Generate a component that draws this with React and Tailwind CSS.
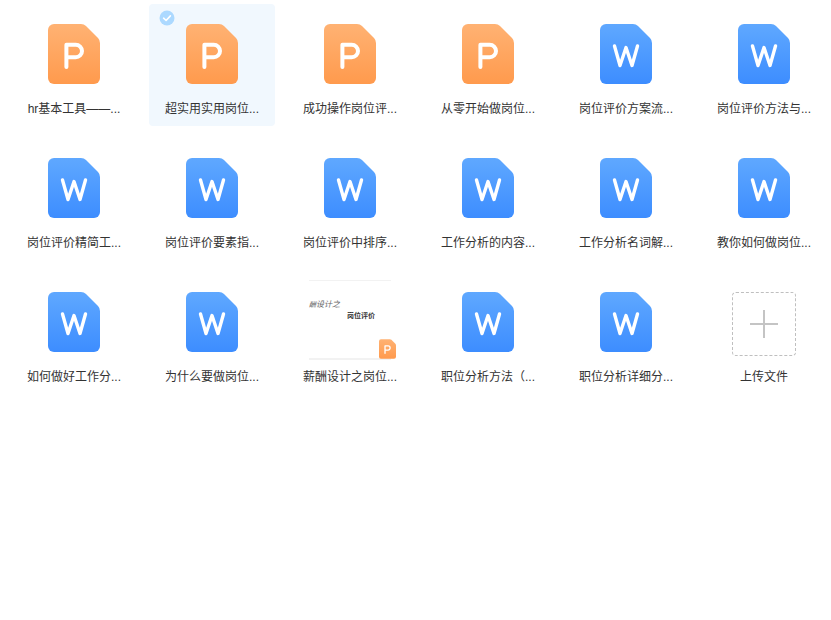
const files = [
  ["p", "hr基本工具——..."],
  ["p", "超实用实用岗位...", true],
  ["p", "成功操作岗位评..."],
  ["p", "从零开始做岗位..."],
  ["w", "岗位评价方案流..."],
  ["w", "岗位评价方法与..."],
  ["w", "岗位评价精简工..."],
  ["w", "岗位评价要素指..."],
  ["w", "岗位评价中排序..."],
  ["w", "工作分析的内容..."],
  ["w", "工作分析名词解..."],
  ["w", "教你如何做岗位..."],
  ["w", "如何做好工作分..."],
  ["w", "为什么要做岗位..."],
  ["t", "薪酬设计之岗位..."],
  ["w", "职位分析方法（..."],
  ["w", "职位分析详细分..."],
];

function FileIcon({ kind, small }) {
  const id = `grad-${kind}`;
  const top = kind === "p" ? "#FFB273" : "#5FA8FF";
  const bottom = kind === "p" ? "#FF9A4D" : "#3D8DFF";
  return (
    <svg viewBox="0 0 52 60" className={small ? "w-[17px] h-[20px]" : "w-[52px] h-[60px]"}>
      <defs>
        <linearGradient id={id} x1="0" y1="0" x2="0" y2="1">
          <stop offset="0" stopColor={top} />
          <stop offset="1" stopColor={bottom} />
        </linearGradient>
      </defs>
      <path d="M6 0H33Q36 0 38 2L50 14Q52 16 52 19V54a6 6 0 0 1-6 6H6a6 6 0 0 1-6-6V6a6 6 0 0 1 6-6Z" fill={`url(#${id})`} />
      {kind === "p" ? (
        <path d="M18.4 43V20.7H27.7a6.3 6.3 0 0 1 0 12.6H18.4" fill="none" stroke="#fff" strokeWidth="4" strokeLinecap="round" strokeLinejoin="round" />
      ) : (
        <path d="M14.5 22L20 41.5L26 23.5L32 41.5L37.5 22" fill="none" stroke="#fff" strokeWidth="3.4" strokeLinecap="round" strokeLinejoin="round" />
      )}
    </svg>
  );
}

function Thumb() {
  return (
    <div className="relative w-[82px] h-[80px] mt-[-4px] border-t border-b-2 border-[#f2f2f2] bg-white">
      <span className="absolute left-0 top-[20px] text-[8px] leading-none italic text-[#666] whitespace-nowrap">
        <span className="text-[7px]">酬</span>设计之
      </span>
      <span className="absolute left-[38px] top-[31px] text-[7px] leading-none font-bold text-[#333] whitespace-nowrap">岗位评价</span>
      <span className="absolute right-[-5px] bottom-[-1px] leading-[0] block"><FileIcon kind="p" small /></span>
    </div>
  );
}

function Tile({ kind, name, selected }) {
  return (
    <div className={`relative w-[126px] h-[122px] rounded flex flex-col items-center pt-[20px] ${selected ? "bg-[#f1f8fe]" : ""}`}>
      {selected && (
        <svg viewBox="0 0 16 16" className="absolute left-[10px] top-[6px] w-[16px] h-[16px]">
          <circle cx="8" cy="8" r="7.5" fill="#ACD9FF" />
          <path d="M4.6 8.2L7.1 10.5L11.4 5.9" fill="none" stroke="#fff" strokeWidth="1.6" strokeLinecap="round" strokeLinejoin="round" />
        </svg>
      )}
      <div className="h-[60px] flex items-center justify-center">
        {kind === "t" ? <Thumb /> : <FileIcon kind={kind} />}
      </div>
      <div className="mt-[17px] text-center text-[12px] leading-[16px] text-[#333] whitespace-nowrap">{name}</div>
    </div>
  );
}

export default function App() {
  return (
    <div className="w-[831px] h-[620px] bg-white pl-[11px] pt-[4px] overflow-hidden font-['Liberation_Sans','Noto_Sans_CJK_SC',sans-serif]">
      <div className="grid grid-cols-[repeat(6,126px)] auto-rows-[122px] gap-[12px]">
        {files.map(([k, n, s]) => (
          <Tile key={n} kind={k} name={n} selected={s} />
        ))}
        <div className="w-[126px] h-[122px] flex flex-col items-center pt-[20px]">
          <div className="w-[64px] h-[64px] rounded border border-dashed border-[#bfbfbf] flex items-center justify-center">
            <svg viewBox="0 0 28 28" className="w-[28px] h-[28px]">
              <path d="M14 0V28M0 14H28" stroke="#c4c4c4" strokeWidth="2" />
            </svg>
          </div>
          <div className="mt-[13px] text-[12px] leading-[16px] text-[#333]">上传文件</div>
        </div>
      </div>
    </div>
  );
}
